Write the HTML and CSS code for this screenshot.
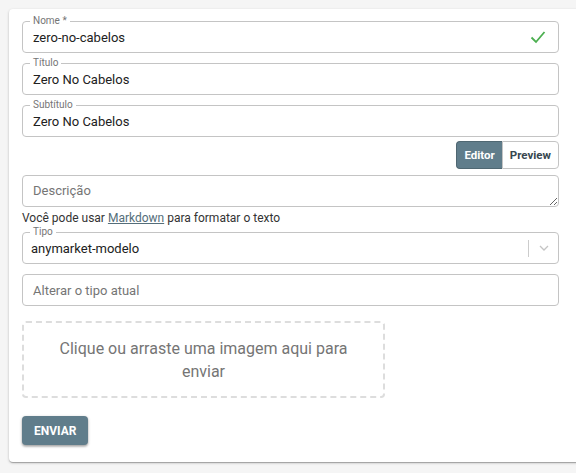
FILE: index.html
```html
<!DOCTYPE html>
<html lang="pt-BR">
  <head>
    <meta charset="UTF-8" />
    <meta name="viewport" content="width=device-width, initial-scale=1.0" />
    <title>Tipo</title>
    <link rel="stylesheet" href="styles.css">
  </head>
  <body>
    <form class="card">
      <div class="field">
        <label>Nome *</label>
        <input type="text" value="zero-no-cabelos" />
        <svg class="check" width="16" height="14" viewBox="0 0 16 14">
          <path d="M1.5 7.5 L6 12 L14.5 2" fill="none" stroke="#4caf50" stroke-width="1.8" />
        </svg>
      </div>
      <div class="field">
        <label>Título</label>
        <input type="text" value="Zero No Cabelos" />
      </div>
      <div class="field">
        <label>Subtítulo</label>
        <input type="text" value="Zero No Cabelos" />
      </div>

      <div class="toggle">
        <button type="button" class="active">Editor</button>
        <button type="button">Preview</button>
      </div>

      <textarea class="desc" placeholder="Descrição"></textarea>
      <p class="help">Você pode usar <a href="#">Markdown</a> para formatar o texto</p>

      <div class="field select">
        <label>Tipo</label>
        <span class="value">anymarket-modelo</span>
        <span class="sep"></span>
        <svg class="chevron" width="10" height="6" viewBox="0 0 10 6">
          <path d="M1 1 L5 5 L9 1" fill="none" stroke="#c4c4c4" stroke-width="1.3" />
        </svg>
      </div>

      <div class="field plain">
        <input type="text" placeholder="Alterar o tipo atual" />
      </div>

      <div class="dropzone">Clique ou arraste uma imagem aqui para enviar</div>

      <button type="submit" class="submit">Enviar</button>
    </form>
  </body>
</html>
```

FILE: styles.css
```css
* {
  margin: 0;
  padding: 0;
  box-sizing: border-box;
}
body {
  font-family: Roboto, "Liberation Sans", sans-serif;
  background-color: #f5f5f5;
  color: #212121;
  overflow: hidden;
  height: 473px;
}
.card {
  display: flex;
  flex-direction: column;
  width: 572px;
  margin: 9px 0 0 9px;
  padding: 12px 22px 17px 13px;
  background-color: #fff;
  border-radius: 4px;
  box-shadow: 0 1px 3px rgba(0, 0, 0, 0.2), 0 1px 1px rgba(0, 0, 0, 0.14),
    0 2px 1px -1px rgba(0, 0, 0, 0.12);
}
.field {
  position: relative;
  display: flex;
  align-items: center;
  height: 32px;
  border: 1px solid #c4c4c4;
  border-radius: 4px;
  margin-bottom: 10px;
}
.field label {
  position: absolute;
  top: -7px;
  left: 7px;
  padding: 0 3px;
  background-color: #fff;
  font-size: 10px;
  line-height: 12px;
  color: #757575;
}
.field input {
  flex: 1;
  height: 100%;
  border: none;
  outline: none;
  background: transparent;
  padding: 0 10px;
  font-family: inherit;
  font-size: 13px;
  color: #212121;
}
.field input::placeholder {
  color: #757575;
}
.check {
  margin-right: 12px;
}
.toggle {
  display: flex;
  align-self: flex-end;
  margin-top: -6px;
  margin-bottom: 6px;
}
.toggle button {
  height: 28px;
  border: 1px solid #c4c4c4;
  background-color: #fff;
  color: #37474f;
  font-family: inherit;
  font-size: 11.5px;
  font-weight: bold;
  padding: 0 7px;
  cursor: pointer;
}
.toggle button:first-child {
  border-radius: 4px 0 0 4px;
  border-right: none;
}
.toggle button:last-child {
  border-radius: 0 4px 4px 0;
}
.toggle button.active {
  background-color: #607d8b;
  border-color: #4f6772;
  color: #fff;
}
.desc {
  height: 32px;
  border: 1px solid #c4c4c4;
  border-radius: 4px;
  padding: 7px 10px;
  font-family: inherit;
  font-size: 13px;
  line-height: 16px;
  resize: vertical;
  outline: none;
}
.desc::placeholder {
  color: #757575;
}
.help {
  font-size: 12px;
  line-height: 14px;
  color: #333;
  margin: 4px 0 7px;
}
.help a {
  color: #546e7a;
}
.select .value {
  flex: 1;
  padding-left: 8px;
  font-size: 13px;
}
.sep {
  width: 1px;
  height: 17px;
  background-color: #ccc;
}
.chevron {
  margin: 0 9px 0 10px;
}
.dropzone {
  width: 363px;
  height: 77px;
  margin-top: 5px;
  border: 2px dashed #ddd;
  border-radius: 4px;
  display: flex;
  align-items: center;
  justify-content: center;
  text-align: center;
  padding: 0 30px;
  font-size: 16px;
  line-height: 23px;
  color: #757575;
}
.submit {
  align-self: flex-start;
  margin-top: 18px;
  height: 29px;
  padding: 0 12px;
  border: none;
  border-radius: 4px;
  background-color: #607d8b;
  color: #fff;
  font-family: inherit;
  font-size: 12px;
  font-weight: bold;
  text-transform: uppercase;
  box-shadow: 0 1px 3px rgba(0, 0, 0, 0.3), 0 2px 2px rgba(0, 0, 0, 0.14);
  cursor: pointer;
}
```
